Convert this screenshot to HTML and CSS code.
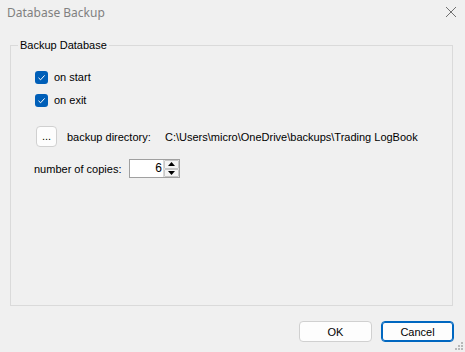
FILE: index.html
```html
<!DOCTYPE html>
<html>
<head>
<meta charset="utf-8">
<link rel="stylesheet" href="styles.css">
</head>
<body>
<div class="window">
  <div class="titlebar">
    <span class="title">Database Backup</span>
    <svg class="close" width="12" height="12" viewBox="0 0 12 12"><path d="M1 1 L11 11 M11 1 L1 11" stroke="#707070" stroke-width="1" fill="none"/></svg>
  </div>
  <div class="group">
    <span class="legend">Backup Database</span>
    <div class="row check-row">
      <span class="checkbox"><svg width="13" height="13" viewBox="0 0 13 13"><path d="M3.5 6.8 L5.6 8.8 L9.6 4.4" stroke="#fff" stroke-width="1" fill="none"/></svg></span>
      <span class="label">on start</span>
    </div>
    <div class="row check-row second">
      <span class="checkbox"><svg width="13" height="13" viewBox="0 0 13 13"><path d="M3.5 6.8 L5.6 8.8 L9.6 4.4" stroke="#fff" stroke-width="1" fill="none"/></svg></span>
      <span class="label">on exit</span>
    </div>
    <div class="row dir-row">
      <button class="browse">...</button>
      <span class="dir-label">backup directory:</span>
      <span class="path">C:\Users\micro\OneDrive\backups\Trading LogBook</span>
    </div>
    <div class="row copies-row">
      <span class="copies-label">number of copies:</span>
      <div class="spinner">
        <span class="value">6</span>
        <div class="spin">
          <span class="spin-btn up"><svg width="7" height="4" viewBox="0 0 7 4"><path d="M0 4 L3.5 0 L7 4 Z" fill="#000"/></svg></span>
          <span class="spin-btn down"><svg width="7" height="4" viewBox="0 0 7 4"><path d="M0 0 L3.5 4 L7 0 Z" fill="#000"/></svg></span>
        </div>
      </div>
    </div>
  </div>
  <div class="buttons">
    <button class="btn">OK</button>
    <button class="btn default">Cancel</button>
  </div>
  <svg class="grip" width="10" height="10" viewBox="0 0 10 10">
    <g fill="#b8b8b8">
      <rect x="7" y="1" width="2" height="2"/>
      <rect x="4" y="4" width="2" height="2"/>
      <rect x="7" y="4" width="2" height="2"/>
      <rect x="1" y="7" width="2" height="2"/>
      <rect x="4" y="7" width="2" height="2"/>
      <rect x="7" y="7" width="2" height="2"/>
    </g>
  </svg>
</div>
</body>
</html>
```
FILE: styles.css
```css
html, body {
  margin: 0;
  padding: 0;
  background: #f0f0f0;
}
.window {
  position: relative;
  width: 465px;
  height: 352px;
  background: #f0f0f0;
  font-family: "Liberation Sans", Arial, sans-serif;
  font-size: 11px;
  color: #000;
  overflow: hidden;
}
.titlebar {
  height: 45px;
  display: flex;
  justify-content: space-between;
  align-items: flex-start;
  padding: 0 7px 0 7px;
  box-sizing: border-box;
}
.title {
  font-family: "Noto Sans", "Open Sans", sans-serif;
  font-size: 12px;
  color: #808080;
  margin-top: 4px;
  line-height: 17px;
}
.close {
  margin-top: 6px;
  margin-right: 1px;
}
.group {
  position: relative;
  margin-left: 10px;
  width: 443px;
  height: 261px;
  box-sizing: border-box;
  border: 1px solid #dadada;
  padding: 25px 0 0 24px;
  display: flex;
  flex-direction: column;
}
.legend {
  position: absolute;
  left: 7px;
  top: -8px;
  padding: 0 2px;
  background: #f0f0f0;
  line-height: 14px;
  font-size: 11px;
}
.row {
  display: flex;
  align-items: center;
}
.check-row {
  height: 13px;
}
.check-row.second {
  margin-top: 10px;
}
.checkbox {
  width: 13px;
  height: 13px;
  border-radius: 3px;
  background: #005fb8;
  display: block;
  flex: none;
}
.checkbox svg {
  display: block;
}
.label {
  margin-left: 6px;
  line-height: 13px;
}
.dir-row {
  margin-top: 19px;
  height: 21px;
}
.browse {
  width: 21px;
  height: 21px;
  margin: 0 0 0 1px;
  padding: 0 0 4px 0;
  box-sizing: border-box;
  border: 1px solid #d0d0d0;
  border-radius: 4px;
  background: #fdfdfd;
  font-family: "Liberation Sans", Arial, sans-serif;
  font-size: 11px;
  line-height: 11px;
  color: #000;
  display: flex;
  align-items: flex-end;
  justify-content: center;
}
.dir-label {
  margin-left: 10px;
  width: 98px;
}
.copies-row {
  margin-top: 12px;
  height: 19px;
}
.copies-label {
  margin-left: -1px;
  width: 95px;
}
.spinner {
  width: 51px;
  height: 19px;
  box-sizing: border-box;
  border: 1px solid #a0a0a0;
  background: #fff;
  display: flex;
  align-items: stretch;
}
.value {
  flex: 1;
  text-align: right;
  line-height: 17px;
  font-size: 12px;
  padding-right: 1px;
}
.spin {
  width: 16px;
  display: flex;
  flex-direction: column;
  border-left: 1px solid #d8d8d8;
  box-sizing: border-box;
}
.spin-btn {
  flex: 1;
  display: flex;
  align-items: center;
  justify-content: center;
  background: #f4f4f4;
  border: 1px solid #c8c8c8;
  border-radius: 1px;
}
.spin-btn svg {
  display: block;
}
.buttons {
  display: flex;
  justify-content: flex-end;
  gap: 9px;
  padding-right: 11px;
  margin-top: 15px;
}
.btn {
  width: 73px;
  height: 21px;
  box-sizing: border-box;
  border: 1px solid #d0d0d0;
  border-radius: 4px;
  background: #fdfdfd;
  font-family: "Liberation Sans", Arial, sans-serif;
  font-size: 11px;
  color: #000;
  padding: 0;
}
.btn.default {
  border: 1px solid #0067c0;
  box-shadow: inset 0 0 0 1px #0067c0;
}
.grip {
  position: absolute;
  right: 1px;
  bottom: 1px;
}
```
